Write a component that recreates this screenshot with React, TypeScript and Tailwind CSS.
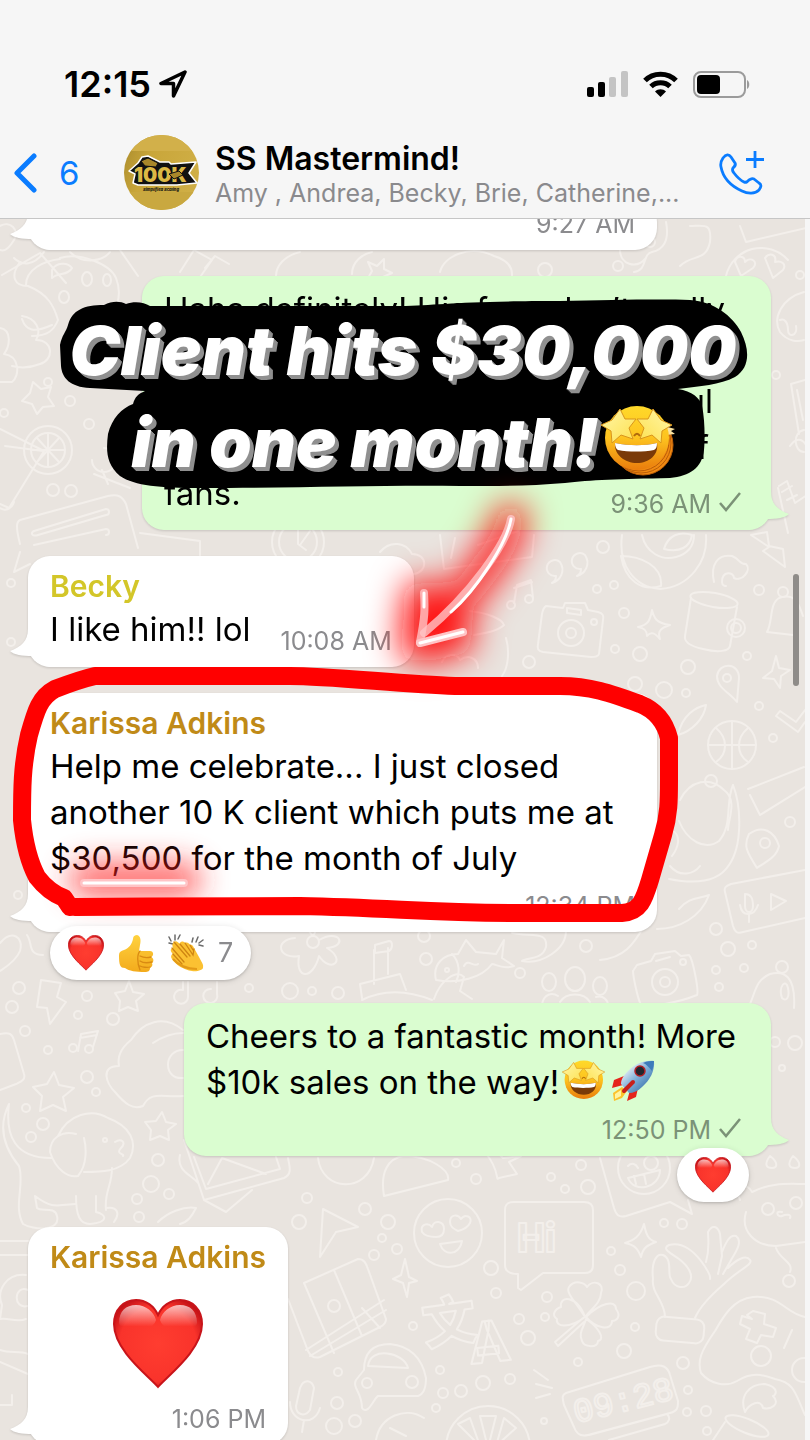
import { ReactNode } from "react";
import clsx from "clsx";

type Side = "in" | "out";

// [x, y, radius] of the small rings scattered over the wallpaper
const RINGS: number[][] = [
  [48, 382, 4], [70, 401, 5], [4, 413, 4], [89, 424, 5], [53, 490, 6], [71, 491, 6], [11, 583, 4],
  [11, 642, 4], [603, 547, 6], [597, 589, 4], [614, 585, 4], [624, 613, 5], [615, 649, 4],
  [640, 654, 7], [529, 662, 6], [759, 590, 5], [747, 656, 4], [688, 667, 7], [635, 684, 7],
  [664, 690, 8], [686, 693, 4], [759, 706, 4], [773, 738, 4], [711, 781, 6], [790, 822, 5],
  [716, 929, 6], [728, 949, 7], [752, 945, 4], [716, 970, 4], [744, 968, 4], [719, 987, 4],
  [586, 946, 6], [520, 973, 5], [426, 959, 6], [424, 936, 6], [18, 895, 4], [19, 988, 6],
  [12, 1007, 6], [87, 996, 5], [78, 1015, 4], [113, 1019, 6], [25, 1031, 5], [48, 1050, 4],
  [249, 988, 4], [290, 991, 8], [312, 991, 4], [338, 993, 6], [87, 1077, 6], [96, 1092, 4],
  [26, 1108, 4], [43, 1124, 6], [31, 1137, 5], [158, 1160, 6], [151, 1184, 8], [169, 1194, 5],
  [137, 1199, 5], [139, 1217, 5], [307, 1198, 5], [365, 1209, 6], [299, 1222, 7], [388, 1222, 7],
  [382, 1238, 4], [374, 1255, 5], [397, 1249, 5], [456, 1163, 4], [476, 1179, 5], [551, 1177, 4],
  [581, 1165, 5], [588, 1187, 7], [565, 1189, 4], [664, 1223, 4], [682, 1224, 5], [491, 1268, 7],
  [496, 1293, 5], [413, 1326, 4], [547, 1297, 5], [519, 1319, 5], [545, 1317, 4], [528, 1338, 7],
  [611, 1251, 4], [620, 1270, 5], [636, 1291, 9], [635, 1327, 4], [624, 1351, 7], [578, 1362, 4],
  [683, 1363, 6], [688, 1390, 4], [687, 1412, 4], [706, 1411, 5], [707, 1431, 4], [440, 1370, 4],
  [483, 1383, 7], [510, 1379, 5], [443, 1393, 5], [461, 1391, 6], [436, 1408, 4], [544, 1421, 3],
  [338, 1372, 4], [337, 1403, 6], [334, 1426, 8], [355, 1421, 6], [775, 1042, 5], [795, 1043, 7],
  [782, 1068, 3], [618, 266, 5], [776, 375, 4], [650, 242, 5], [800, 275, 4], [545, 270, 7],
];

function Doodles() {
  return (
    <svg
      aria-hidden="true"
      viewBox="0 219 805 1221"
      preserveAspectRatio="xMidYMin slice"
      className="absolute inset-0 h-full w-full"
      fill="none"
      stroke="#f3efeb"
      strokeWidth="2"
      strokeLinecap="round"
      strokeLinejoin="round"
    >
      {RINGS.map(([x, y, r]) => (
        <circle key={`${x}-${y}`} cx={x} cy={y} r={r} />
      ))}
      {/* top strip */}
      <path d="M0 226c10-6 20 4 14 14s-10 12-14 10M2 275l38-22 26 30M14 258c8 8 20 8 30-6M70 252c14 14 34 8 40 0M120 250l18 26M180 272l14-22 18 10-14 20M205 268l10-12 14 8" />
      <path d="M300 252c-16 4-24 14-24 24M352 274c0-12 10-20 20-22M368 262l9 4 7-7v10l8 4-9 4-1 9-6-8-9 2 5-9zM440 272c4-16 30-28 54-16 20 6 18 18 18 20M620 250c0 14 16 20 26 8M666 222c4 20-4 28-14 30s-4 18-18 20M690 226c14 0 22-4 20 16-4 20-18 12-30 24M740 226l6 16 60-14M726 276a36 36 0 0 1 62-16M735 262c2-8 10-6 10 0 6-6 14 0 8 6l-12 8zM765 258c4-6 12-4 10 4 6-2 12 2 8 8l-10 8z" />
      {/* cookie, clouds and star */}
      <path d="M20 262c-10 14-6 24 8 24 20 8 26 20 30 34-4 10-10 16-26 16M26 285c0-16 18-24 34-26M60 258c20-6 50 6 56 20 8 20-2 34-10 46M52 325c-18 8-26 6-30-6M52 270c4-8 16-8 20-2-4 8-14 4-20 10z" />
      <ellipse cx="64" cy="297" rx="5" ry="6" />
      <ellipse cx="87" cy="279" rx="5" ry="7" />
      <ellipse cx="107" cy="280" rx="4" ry="6" />
      <path d="M0 328c12 2 10 18 4 26 16 2 16 22 8 28H0M22 316c14 2 20 14 14 24 18 0 18 20 4 24-10 4-20 4-28 2M33 382l8 7 10-2-3 10 6 9-11 1-6 7-5-10-10-3 8-8z" />
      <circle cx="48" cy="450" r="24" />
      <circle cx="48" cy="450" r="17" />
      <path d="M48 434v32M32 450h32M37 438l22 24M59 438l-22 24M0 429l44 22-35 57-9-4M5 446l38 5M104 448a12 12 0 1 1-12 12M102 470l6 14M130 488l-36-14" />
      <path d="M20 520l88-24c10-2 14 0 18 8l12 44M20 520c-4 2-4 8 0 24M34 531l72-22c4 0 4 6 0 6l-68 20c-6 2-8-2-4-4zM34 545l72-16c4 0 4 6 0 6M20 552l-6 20 16-8M0 508c6 4 12 0 14-6" />
      {/* beside the first outgoing message */}
      <path d="M804 292c-22 6-32 26-24 40 8 10 18 10 24 8M780 320c4-2 8 2 8 10s10 6 8-4M791 384l14-4M791 384l8 50M797 390l6 30M790 446c10-14 20-2 18 14M779 486l8-5 8 22 12-8M782 492l10-6M787 500l10-5M778 488l10 45M804 430c-12 2-10 22 0 22" />
      {/* watch, sweets and leaves between bubbles */}
      <circle cx="298" cy="542" r="26" />
      <circle cx="298" cy="542" r="19" />
      <path d="M298 530v14l8 6M300 545l10-14M380 552c10-12 26-10 32 2 16 0 16 18 2 20M440 535l4 34 88-12 2-22M455 538l-4 20M478 545l40-14M140 533l60 8v18" />
      <path d="M622 535c-4 30 12 52 38 54 30-2 48-28 46-54M642 535c4 18 20 26 34 22 14-4 18-12 18-22M664 549c4-14 16-18 28-14-2 12-12 18-28 14zM621 556c20 0 42 10 40 30-20 6-36-6-40-30zM751 535l16-3 2 14 14 3 2 18-22-16 6-4z" />
      <path d="M560 562a8 8 0 1 0-4 14c0 4-2 6-4 7 8-2 14-12 8-21zM585 555a8 8 0 1 0-4 14c0 4-2 6-4 7 8-2 14-12 8-21zM714 582c-4-18 4-28 18-26 10 4 6 8 14 8 6 6-4 18-12 14 0-6-12-8-12 4 0 4 4 4 4 4" />
      <path d="M514 603l3-18 14-5 2 18M514 588l18-6M470 611c18 2 32 8 34 14-6 6-18 8-30 10M506 638c4 14 2 30-4 38M442 662c4-10 16-8 18-2 8-6 18-2 18 8" />
      <circle cx="511" cy="605" r="4" />
      <circle cx="529" cy="599" r="4" />
      {/* camera, mug, bell */}
      <path d="M546 606l17 2 2-5h20l3 7 10 2c5 1 6 4 5 8l-4 34c-1 3-4 3-8 3l-48-5c-5-1-6-3-5-8l4-30c1-5 2-7 4-8z" />
      <circle cx="571" cy="633" r="13" />
      <circle cx="571" cy="633" r="5" />
      <circle cx="594" cy="622" r="3" />
      <path d="M567 608l14 2v5l-14-2zM652 610c2 8 4 13 18 15-9 3-13 6-10 14-5-6-9-8-13-3 0-5-2-8-9-9 10-2 12-6 14-17z" />
      <ellipse cx="714" cy="600" rx="24" ry="7" transform="rotate(10 714 600)" />
      <path d="M691 598l-6 38c-1 6 4 10 18 13 16 4 26 2 27-3l7-39" />
      <circle cx="736" cy="628" r="9" />
      <circle cx="736" cy="628" r="5" />
      <circle cx="783" cy="592" r="5" />
      <path d="M767 632c6-10 2-28 12-34 16-6 20 6 24 18M767 632l26 3M776 656l3 12 11 2-9 6-1 12-6-9-11-1 9-7z" />
      {/* right column next to the circled message */}
      <path d="M737 702c-8-10-20-14-20-26 2-14 22-14 22 2zM776 716l4-5 16 11 9-12M776 716l22 16 7-10M678 735c4-20 18-28 28-30-2 14-14 26-28 30z" />
      <circle cx="727" cy="678" r="4" />
      <circle cx="732" cy="745" r="24" />
      <path d="M732 721v48M708 745h48M716 728c12 10 12 26 0 34M748 728c-12 10-12 26 0 34M680 800c10-20 30-24 44-10 14 10 4 30 4 40M733 785c-8 18 0 40-14 56-14 10-32 0-40-20M733 785c8 20 10 60-4 80-10 16-30 20-60 14M748 789l56-22M750 795l10 20 45-28M757 868c-10-16-14-22-8-34 14-10 26-2 30 12-2 10-10 14-22 22zM672 830c10 6 6 18 0 26M670 866c10 12 24 8 30 0" />
      <circle cx="765" cy="843" r="5" />
      <path d="M805 870l-74 14c-6 2-7 4-6 8l8 34c2 6 4 8 10 6l62-14M771 894v16l15-9zM745 894c6 0 8 4 8 12s-8 8-8 0zM740 905c2 12 14 12 18 0M749 914v8M709 895c-8 22-30 34-52 34M709 895c-10 4-20 2-30 14M600 960c24-2 34-16 44-34" />
      {/* fish, camera, people */}
      <path d="M436 980c-4-16 8-26 22-26l8-14 10 12 20 2 8-14-2 18 12 8c-12 4-18-2-22-2-10 14-34 20-56 16zM452 954c8 8 8 20 4 28M464 966c4-8 10 2 14-2M512 933c20 4 36-2 34 14-4 14-20 10-24 14 20 4 44-12 44-30" />
      <circle cx="447" cy="970" r="2" />
      <ellipse cx="575" cy="979" rx="10" ry="12" />
      <ellipse cx="549" cy="982" rx="7" ry="9" />
      <ellipse cx="600" cy="986" rx="7" ry="9" />
      <path d="M542 1004c2-10 10-12 16-8M560 1002c6-10 24-10 30 0M596 997c8-2 12 4 12 8M637 965l14-4 4-7 20-3 6 5 8-1c4 4 10 36 8 40-20 8-44 12-56 10-4-8-8-30-8-34z" />
      <circle cx="665" cy="982" r="13" />
      <circle cx="665" cy="982" r="5" />
      <circle cx="683" cy="962" r="3" />
      <path d="M656 961l14-4M750 1004c6-14 6-24 20-30 14-4 26 2 24 34M782 998c-4-12 4-20 6-10s-2 14-6 10z" />
      <circle cx="782" cy="967" r="6" />
      <circle cx="313" cy="942" r="6" />
      <path d="M313 936c-14-14 10-14 0 0M319 940c20-12 30 6 8 8 20 12 4 26-8 8-6 24-24 24-20 0-20 4-26-16-4-18M375 945l14-4c4 0 4 8 0 10l-14 2zM374 950v34M388 948v26M362 998l-2-14 40-10 6 16M362 1000c24-12 50-8 70 0M434 999c6-18 22-30 30-22l-4 14 12 8" />
      {/* left column of small things */}
      <path d="M0 943c12-14 24-6 20 8-4 10-14 16-20 20M27 935c6 8 0 20 16 20M41 980l20 3-4 14 9 5-16 22-3-16-10-1zM129 981l4 11 11 2-8 7 2 10-10-4-9 4 1-10-5-8 10-2zM188 982v14a7 7 0 1 1-5-6v-8M217 982v12a7 7 0 1 1-6-5M78 1051l3-17 17-3-5 16M80 1038l17-3" />
      <circle cx="73" cy="1048" r="4" />
      <circle cx="89" cy="1049" r="4" />
      <path d="M0 1034c10-2 12 0 14 6l10 34c2 6-4 8-8 10l-16 6M54 1072l5 13 15 3-11 9 3 14-13-6-13 6 2-15-9-9 14-3zM162 1112l4 10 10 2-8 6 1 10-9-4-10 4 1-10-6-8 11-1z" />
      <path d="M183 1030c-20-16-40-8-52 10-10 8-14 16-12 26-20 0-12 18-4 26 10 12 18 18 28 14 8-16 20-8 40-10M183 1033c-14 0-24 6-30 10M183 1050c-20 0-20 30 0 28" />
      <path d="M9 1104c-10 20-8 40 10 62 6 18-6 40 4 58 10 6 38 8 34-8-2-10-16-4-20-8l-2-12c16 12 20 10 40 8M9 1104c-4 32 6 54 42 54M58 1136c10-22 34-28 50-18 22 8 30 24 22 40-10 14-30 14-46 14M76 1134c-14-4-26 4-26 18 6 18 18 26 28 24 10-12 8-30 6-38M112 1168c0 18-8 24-6 42M76 1196c0 20 4 28 14 28 20-2 16-10 6-12v-16M106 1208c12-2 14 6 8 14" />
      <circle cx="105" cy="1140" r="2" />
      <path d="M115 1142c6-4 12 0 6 6s4 6 2 8M184 1140l20 60 80-22c8-4 6-10 4-20M194 1157l12 32 74-20-4-12M208 1184l14-26 44 16M180 1155c-4 16 12 20 18 28M204 1200l22 12 26-22M318 1158c4 34 50 36 56 0M384 1196c-4-24 4-38 20-40 26 0 46 14 44 24zM158 1222c10-10 26-16 38-14-4 8-8 14-16 16" />
      {/* bottom area */}
      <path d="M485 1152c16 20 10 30 14 26l18-4-8-12 12-6-18 2-8-8M600 1158l14 50c2 6 4 10 12 8l44-14 22 12-4-14" />
      <circle cx="644" cy="1168" r="26" />
      <circle cx="651" cy="1163" r="7" />
      <path d="M628 1178l32-8c0 18-26 24-32 8zM634 1176l2 8M644 1174l2 10M628 1166c4-4 8-2 10 2M770 1156c-6 8-4 12 2 12s6-6-2-12zM793 1156c-6 8-4 12 2 12s6-6-2-12z" />
      <path d="M740 1200c-6-14 8-18 12-8 20-10 36-8 54-8M746 1212c-6 20 10 34 30 34l29-4M782 1212c-8-2-4 6 0 4s10-2 8 2M776 1248c4 12 18 14 14 24" />
      <circle cx="768" cy="1209" r="6" />
      <circle cx="796" cy="1203" r="6" />
      <circle cx="789" cy="1281" r="6" />
      <circle cx="448" cy="1233" r="34" />
      <path d="M422 1232c-2-8 6-10 10-5 2-8 12-6 12 2 0 6-4 8-8 8-8 0-12-2-14-5zM450 1222c0-8 8-8 11-3 4-6 12-2 9 4-2 4-8 7-12 8-4-2-8-4-8-9zM440 1244l22-3c-2 14-18 16-22 3z" />
      <path d="M514 1202h70c6 0 9 3 9 8v55c0 5-3 8-8 8h-42l-22 17-3-2v-14c-8 0-13-2-13-9v-55c0-6 3-8 9-8zM644 1224c2 10 4 16 12 18-8 3-13 5-15 15-3-8-6-12-16-14 9-3 15-6 19-19z" />
      <text x="517" y="1252" fontFamily="Roboto, sans-serif" fontWeight="900" fontSize="40">Hi</text>
      <text x="469" y="1362" transform="rotate(-6 490 1340)" fontFamily="Roboto, sans-serif" fontWeight="900" fontSize="58">A</text>
      <text x="422" y="1342" transform="rotate(-8 445 1320)" fontFamily="'Noto Sans CJK SC', sans-serif" fontWeight="900" fontSize="54">文</text>
      <path d="M585 1317c-8-14-20-24-16-30 6-8 16-4 18 0 6-8 18-4 14 6 0 10-10 16-16 24zM585 1317c-16 12-30 10-28 2-6-4-2-10 4-12-2-12 16-12 24 10zM586 1317c14-14 30-18 30-8 6 8 0 12-4 12 0 10-16 8-26-4zM586 1319c12 8 20 20 12 22 0 8-14 6-16 0-4-8 2-14 4-22zM583 1318l-28 24 3 4 26-24" />
      <path d="M665 1317c0-16-14-24-12-38-2-18 4-26 10-24 10 4 4 20 8 24 4 10 14 10 18 4 6-8-2-18-10-24-8-6-18-10-10-14 14-4 26 8 32 16 6 8 10 14 9 18M706 1262c4-14 2-24 2-30 4-8 10-6 12 2l2 22-4 18M722 1252c4-10 8-18 14-16 8 6-2 18-6 26l-7 12M728 1268c8-8 18-14 22-8 4 4-12 10-26 24-14 12-24 22-29 34" />
      <rect x="656" y="1318" width="48" height="24" rx="8" transform="rotate(5 680 1330)" />
      <path d="M805 1317c-20-4-24-22-52-20-20 2-30 20-38 34-14 20-18 30-14 42 10 12 26 14 36 8 16-10 26-6 38-2 20 4 20 14 30 36M747 1315l6-4 12 3-1 10 12 4-3 9-12-2-4 8-11-4 4-10-10-5 2-8 10 3zM792 1330l-8 18" />
      <circle cx="761" cy="1356" r="10" />
      <circle cx="804" cy="1370" r="12" />
      <path d="M745 1412c-6-16 4-28 20-28 16 4 10 12 8 12 8 8-2 14-10 12-2-10-14-4-18 4z" />
      <ellipse cx="747" cy="1426" rx="23" ry="7" transform="rotate(22 747 1426)" />
      <path d="M725 1422l-12 18M566 1393l84-26c12-4 18 0 20 8l8 26c0 6 0 10-8 12l-82 22c-8 2-12-2-14-8l-10-22c-2-8-2-10 2-12zM589 1435l78-21c4 4 2 8-2 10l-56 16M534 1370l14 10M536 1384l16 4M536 1398l14-4" />
      <text x="572" y="1412" transform="rotate(-14 620 1400)" fontFamily="'Liberation Mono', monospace" fontSize="34">09:28</text>
      <circle cx="488" cy="1448" r="42" />
      <path d="M488 1448l-8-32h16zM480 1446l-22-22 12-6zM496 1446l8-28 12 10z" />
      <path d="M323 1209l-3 48 16-25 22-5zM304 1283l54-24c6 0 8 4 10 10l18 50c0 4-2 6-6 8l-60 30c-6 2-10-2-12-6l-20-52M306 1350l78-50M310 1356l76-46M362 1308l18 20M304 1283l30 70M334 1270l28 66" />
      <circle cx="334" cy="1306" r="6" />
      <path d="M405 1259l-4 16-8 4 10 4 4 14 2-14 8-2-8-4zM364 1370c0-18 10-26 26-26 20 2 32 14 36 34 0 10-2 16-8 18h-40c-4 2-10 20-16 12 0-16-10-20-6-28zM368 1366c2-20 36-14 40 2z" />
      <circle cx="367" cy="1383" r="5" />
      <circle cx="412" cy="1382" r="6" />
      <path d="M300 1388c4-10 12-8 14 0l-4 22c-6 8-14 4-14-4zM290 1402c0 20 24 26 30 6M304 1420l-2 12M376 1440c4-24 30-34 48-22M390 1428l16 8" />
      <path d="M0 1241h28M0 1255h28M0 1350c10 4 20 0 28 4M0 1362l28 12M12 1395v10H0M26 1275c-20-2-30 16-24 30l-2 14c8-2 16 4 26 0M28 1290c-14-6-16 20 0 16" />
    </svg>
  );
}

function Heart({ className }: { className?: string }) {
  return (
    <svg viewBox="0 0 90 90" className={className} role="img" aria-label="Red heart">
      <defs>
        <radialGradient id="heartFill" cx="50%" cy="50%" r="62%">
          <stop offset="0" stopColor="#ff3d30" />
          <stop offset="0.7" stopColor="#f9332b" />
          <stop offset="1" stopColor="#b70a12" />
        </radialGradient>
        <linearGradient id="heartShine" x1="0" y1="0" x2="0" y2="1">
          <stop offset="0" stopColor="#fff" stopOpacity="0.7" />
          <stop offset="0.8" stopColor="#fff" stopOpacity="0" />
        </linearGradient>
      </defs>
      <path
        d="M45 88C37 78 1 52 1 25 1 10 11 1 23 1c10 0 18 6 22 15C49 7 57 1 67 1c12 0 22 9 22 24 0 27-36 53-44 63z"
        fill="url(#heartFill)"
        stroke="#c8141a"
        strokeWidth="2"
      />
      <path d="M6 24C6 12 13 6 23 6s18 7 20 15c-4 14-34 16-37 3zM84 24C84 12 77 6 67 6s-18 7-20 15c4 14 34 16 37 3z" fill="url(#heartShine)" />
    </svg>
  );
}

function ThumbsUp() {
  return (
    <svg viewBox="0 0 36 38" className="h-[38px] w-9" role="img" aria-label="Thumbs up">
      <defs>
        <linearGradient id="thumbFill" x1="0" y1="0" x2="0" y2="1">
          <stop offset="0" stopColor="#ffd23f" />
          <stop offset="1" stopColor="#f3ab1c" />
        </linearGradient>
      </defs>
      <path
        d="M1 21c0-3 2-4 5-5 5-2 8-6 9-11 0-3 2-4 4-4 4 1 4 6 3 10l-1 6h11c4 0 4 5 1 6 3 1 3 5 1 6 1 2 0 4-2 5 0 3-2 4-5 4-9 0-16-1-20-4-5 0-6-3-6-13z"
        fill="url(#thumbFill)"
      />
      <path d="M33 23c-4 1-9 0-11-1M34 28c-4 1-9 1-12-1M32 33c-3 1-8 0-10-1M22 17c-3 3-3 12 0 19" fill="none" stroke="#d98a12" strokeWidth="1.3" strokeLinecap="round" />
    </svg>
  );
}

function Clap() {
  return (
    <svg viewBox="0 0 36 38" className="h-[38px] w-9" role="img" aria-label="Clapping hands">
      <path d="M1 3l2 4M7 1v5M12 1l-2 4M1 9l4 1M25 4l-1 4M30 3l-2 5M35 6l-4 3M35 12l-4-1" fill="none" stroke="#6b6b6b" strokeWidth="1.5" strokeLinecap="round" />
      <path
        d="M6 8c2-2 4 0 6 2 0-3 3-3 5-1 2-1 4 0 5 2 2-1 3 1 4 3l5 9c2 4 5 8 4 10 1 3-7 5-11 4C16 36 8 31 4 25c-2-3 0-5 1-5-3-3-3-5 0-6-1-3-1-4 1-6z"
        fill="#fbc132"
      />
      <path d="M6 8l13 15M4 14l12 14M5 20l9 10M12 10l10 12M17 9l8 12 1-6M22 11l3 5" fill="none" stroke="#cf8512" strokeWidth="1.3" strokeLinecap="round" />
      <path d="M5 25c6 7 14 10 24 10" fill="none" stroke="#e39a17" strokeWidth="2" />
    </svg>
  );
}

function StarStruck({ className, trail }: { className?: string; trail?: boolean }) {
  const star = "M19 3l5 10 11 0-7 9 4 11-12-4-9 8-1-12-10-6 11-5z";
  return (
    <svg viewBox="0 0 72 70" className={clsx("overflow-visible", className)} role="img" aria-label="Star-struck face">
      <defs>
        <linearGradient id="faceFill" x1="0" y1="0" x2="0" y2="1">
          <stop offset="0" stopColor="#ffd92a" />
          <stop offset="0.5" stopColor="#fdc31f" />
          <stop offset="1" stopColor="#e97c0c" />
        </linearGradient>
        <linearGradient id="starFill" x1="0" y1="0" x2="1" y2="1">
          <stop offset="0" stopColor="#fff7a8" />
          <stop offset="1" stopColor="#fde04f" />
        </linearGradient>
      </defs>
      {trail &&
        [6, 4, 2].map((d) => (
          <circle key={d} cx={34 + d} cy={34 + d} r="30" fill="#f08a12" stroke="#b95c08" strokeWidth="1" />
        ))}
      {trail && <path d="M61 21l11 3-4 2 4 3-9 1z" fill="#fbe3a0" />}
      <circle cx="34" cy="33" r="32" fill="url(#faceFill)" />
      <path d="M12 38c14 3 30 3 42 0 2 12-8 20-20 20S11 50 12 38z" fill="#7a3a08" />
      <path d="M12 38c14 3 30 3 42 0 0 4-1 6-3 7-10 2-26 2-36 0-2-1-3-4-3-7z" fill="#fff" />
      <path d="M31 31c2-3 4-3 6 0" stroke="#b06a0c" strokeWidth="2" fill="none" />
      <path d={star} transform="translate(-2 1)" fill="url(#starFill)" stroke="#d9951c" strokeWidth="1" strokeLinejoin="round" />
      <path d={star} transform="matrix(-1 0 0 1 69 1)" fill="url(#starFill)" stroke="#d9951c" strokeWidth="1" strokeLinejoin="round" />
    </svg>
  );
}

function Rocket({ className }: { className?: string }) {
  return (
    <svg viewBox="0 0 44 42" className={className} role="img" aria-label="Rocket">
      <defs>
        <linearGradient id="rocketBody" x1="0" y1="0" x2="1" y2="1">
          <stop offset="0.2" stopColor="#e6eef5" />
          <stop offset="0.5" stopColor="#7fb0d8" />
          <stop offset="0.9" stopColor="#2f68a5" />
        </linearGradient>
      </defs>
      <path d="M13 16L3 20 1 28l11-3zM27 28l-2 9-9 4 3-11z" fill="#e5241c" />
      <path d="M11 27l-9 6 1 8 8-3 5-7z" fill="#fbc22c" />
      <path d="M10 30l-6 4v5l6-3z" fill="#fff3a0" />
      <path d="M43 1c1 10-4 19-12 26-4 4-9 6-13 6l-8-9c0-5 3-9 7-13C24 4 33 0 43 1z" fill="url(#rocketBody)" />
      <path d="M43 1c0 4-1 7-2 10-3-4-6-7-9-8 4-2 8-2 11-2z" fill="#3d7cbb" />
      <circle cx="29" cy="11" r="5" fill="#20262e" stroke="#b32024" strokeWidth="1.5" />
      <path d="M22 22l-9 9" stroke="#c8201b" strokeWidth="4" strokeLinecap="round" />
    </svg>
  );
}

function Tail({ side }: { side: Side }) {
  return (
    <svg
      aria-hidden="true"
      viewBox="0 0 42 38"
      className={clsx(
        "absolute bottom-0 h-[38px] w-[42px]",
        side === "in" ? "-left-[18px] fill-white" : "-right-[18px] -scale-x-100 fill-[#dafdd0]",
      )}
    >
      <path d="M18 0C18 12 11 18 0 22c4 4 12 5 23 5 5 6 11 11 19 11V0z" />
    </svg>
  );
}

function Check() {
  return (
    <svg viewBox="0 0 22 20" className="mb-1 h-5 w-[22px]" fill="none" stroke="currentColor" strokeWidth="2.5" role="img" aria-label="Sent">
      <path d="M1 11l6 7L21 1" />
    </svg>
  );
}

function Time({ children, sent, className }: { children: ReactNode; sent?: boolean; className?: string }) {
  return (
    <div
      className={clsx(
        "flex items-center justify-end gap-2 text-[25px] leading-7 whitespace-nowrap",
        sent ? "text-[#7b9277]" : "text-[#8b8b8e]",
        className,
      )}
    >
      <time>{children}</time>
      {sent && <Check />}
    </div>
  );
}

function Bubble({ side, className, children }: { side: Side; className?: string; children: ReactNode }) {
  return (
    <article
      className={clsx(
        "relative rounded-[22px] px-[22px] pt-[10px] pb-3 text-[33px] leading-[46px] text-black drop-shadow-[0_1px_1px_rgba(0,0,0,0.15)]",
        side === "in" ? "self-start bg-white" : "self-end bg-[#dafdd0]",
        className,
      )}
    >
      <Tail side={side} />
      <div className="relative">{children}</div>
    </article>
  );
}

function Author({ children, className }: { children: ReactNode; className: string }) {
  return <h2 className={clsx("text-[30px] leading-10 font-semibold", className)}>{children}</h2>;
}

function Reactions({ children, className }: { children: ReactNode; className: string }) {
  return (
    <button
      className={clsx(
        "absolute flex h-[54px] items-center rounded-full bg-white px-[18px] shadow-[0_1px_6px_rgba(0,0,0,0.12)]",
        className,
      )}
    >
      {children}
    </button>
  );
}

function StatusBar() {
  return (
    <div className="flex items-center justify-between pr-[60px] pl-16">
      <div className="flex items-center gap-2">
        <span className="text-[36px] leading-[44px] font-semibold">12:15</span>
        <svg viewBox="0 0 28 28" className="size-7" fill="none" stroke="#000" strokeWidth="3.500" strokeLinejoin="round" aria-label="Location">
          <path d="M26 2L2 13.500h12.500V26z" />
        </svg>
      </div>
      <div className="flex items-center gap-[15px]">
        <svg viewBox="0 0 41 26" className="h-[26px] w-[41px]" aria-label="Signal">
          <rect x="0" y="16" width="7" height="10" rx="2" />
          <rect x="11" y="11" width="7" height="15" rx="2" />
          <rect x="22" y="6" width="7" height="20" rx="2" fill="#c4c4c4" />
          <rect x="34" y="0" width="7" height="26" rx="2" fill="#c4c4c4" />
        </svg>
        <svg viewBox="0 0 35 26" className="h-[26px] w-[35px]" fill="none" stroke="#000" strokeWidth="5" aria-label="Wi-Fi">
          <path d="M2 9.500C10 1 25 1 33 9.500M8 15.500c5-5 14-5 19 0" />
          <path d="M12 20.500c3-3 8-3 11 0L17.500 26z" fill="#000" stroke="none" />
        </svg>
        <svg viewBox="0 0 57 27" className="h-[27px] w-[57px]" aria-label="Battery">
          <rect x="1" y="1" width="51" height="25" rx="7" fill="none" stroke="#9b9b9b" strokeWidth="2" />
          <rect x="4" y="4" width="23" height="19" rx="4" />
          <path d="M54 9c3 1 3 8 0 9z" fill="#9b9b9b" />
        </svg>
      </div>
    </div>
  );
}

function Avatar() {
  return (
    <svg viewBox="0 0 75 75" className="size-[75px] shrink-0" role="img" aria-label="100K Simplified Scaling">
      <defs>
        <linearGradient id="gold" x1="0" y1="0" x2="1" y2="0.4">
          <stop offset="0" stopColor="#a88a2c" />
          <stop offset="0.4" stopColor="#c9a63a" />
          <stop offset="1" stopColor="#cfae45" />
        </linearGradient>
        <clipPath id="avatarClip">
          <circle cx="37.500" cy="37.500" r="37.500" />
        </clipPath>
      </defs>
      <g clipPath="url(#avatarClip)">
        <rect width="75" height="75" fill="url(#gold)" />
        <rect width="75" height="16" fill="#d2b04a" />
        <rect y="57" width="75" height="18" fill="#c9a840" />
      </g>
      <path d="M5 36l9-8 4-6 6-1 12 6h9l2 2 25-2-7 11 8 10-20 2H14l-5-2 2-9z" fill="#111" stroke="#fff" strokeWidth="1.500" strokeLinejoin="round" />
      <text x="10" y="47" fontFamily="Inter, sans-serif" fontWeight="900" fontSize="20" fill="#dcb845">
        100K
      </text>
      <path d="M17 26l7-3 10 5-2 4-11-1zM45 39l10-3 4 4-9 4z" fill="#a8872a" stroke="#111" strokeWidth="1" />
      <text x="37" y="56" textAnchor="middle" fontFamily="Inter, sans-serif" fontStyle="italic" fontWeight="800" fontSize="4" fill="#111">
        Simplified Scaling
      </text>
    </svg>
  );
}

function ChatHeader() {
  return (
    <header className="relative z-10 shrink-0 border-b border-[#c6c6c6] bg-[#f6f6f6] pt-[62px] pb-2">
      <StatusBar />
      <div className="mt-[29px] flex items-center pr-[45px] pl-[14px]">
        <a href="#chats" aria-label="Back, 6 unread chats" className="flex w-[110px] items-center gap-[21px] text-[33px] leading-10 text-[#0a7cff]">
          <svg viewBox="0 0 24 40" className="h-10 w-6" fill="none" stroke="currentColor" strokeWidth="5" strokeLinecap="round" strokeLinejoin="round">
            <path d="M20 3L3 20l17 17" />
          </svg>
          6
        </a>
        <Avatar />
        <div className="ml-4 min-w-0 flex-1 pt-1">
          <h1 className="text-[32px] leading-9 font-semibold whitespace-nowrap">SS Mastermind!</h1>
          <p className="text-[25px] leading-8 whitespace-nowrap text-[#8a8a8d]">Amy , Andrea, Becky, Brie, Catherine,...</p>
        </div>
        <button aria-label="Start group call" className="text-[#0a7cff]">
          <svg viewBox="0 0 46 46" className="size-[46px]" fill="none" stroke="currentColor" strokeWidth="2.800" strokeLinecap="round" strokeLinejoin="round">
            <path d="M4 8c3-4 6-4 8-1l4 6c1 2 0 3-2 5-1 2-1 3 1 5 3 4 6 7 10 9 2 1 3 0 5-2 2-1 3-2 5-1l5 4c3 2 2 4 0 7-4 4-11 4-17 1C12 36 4 28 2 17c-1-4 0-6 2-9z" />
            <path d="M36 1v17M27 9.500h18" strokeLinecap="butt" />
          </svg>
        </button>
      </div>
    </header>
  );
}

// marker strokes and blacked-out area drawn over the conversation
function Annotations() {
  return (
    <div className="pointer-events-none absolute inset-x-0 top-0 z-20">
      <svg viewBox="0 0 810 1440" className="w-full" fill="none" strokeLinecap="round" strokeLinejoin="round" aria-hidden="true">
        <defs>
          <filter id="glow" filterUnits="userSpaceOnUse" x="300" y="400" width="320" height="360">
            <feGaussianBlur stdDeviation="17" />
          </filter>
          <filter id="lineGlow" filterUnits="userSpaceOnUse" x="0" y="760" width="300" height="240">
            <feGaussianBlur stdDeviation="15" />
          </filter>
        </defs>
        <path
          d="M60 345C62 335 66 332 68 325C72 310 84 305 104 305C112 301 120 301 126 304C134 301 144 302 150 306L400 306C440 305 460 301 560 301C610 300 660 299 690 300C715 302 732 316 741 332C750 350 750 368 735 377C720 385 700 386 678 389C692 391 700 398 702 406C705 420 705 440 704 450C702 468 690 476 670 478C620 479 590 480 565 483C530 486 500 486 460 486C380 485 300 488 200 488C160 488 135 486 120 476C106 464 106 450 108 434C112 418 122 408 133 404C135 397 138 394 145 391L90 388C70 387 62 378 61 366z"
          fill="#000"
        />
        <g stroke="#ff1010" filter="url(#glow)">
          <path d="M511 519c-4 24-40 75-87 116" strokeWidth="30" />
          <path d="M424 600c1 14-1 28-4 43l34-8" strokeWidth="40" />
        </g>
        <path d="M86 880h98" stroke="#ff2020" strokeWidth="34" opacity="0.700" filter="url(#lineGlow)" />
        <path
          d="M75 907C150 906 210 907 300 906C400 908 440 914 540 913L622 913C640 912 644 900 650 880L663 835C669 815 669 800 669 780V738C665 722 655 710 640 704C610 693 590 686 560 686H455C400 684 330 676 290 676H95C82 679 68 684 55 689C40 697 36 710 29 735C22 765 22 790 22 820C24 840 28 860 37 877C47 890 56 895 64 898L70 907"
          stroke="#ff0000"
          strokeWidth="18"
        />
        <g stroke="#ffc4c6" strokeWidth="8">
          <path d="M511 519c-4 24-40 75-87 114" strokeOpacity="0.800" />
          <path d="M424 593c1 16 1 24-4 49" strokeOpacity="0.800" />
          <path d="M420 643l43-11M84 883h100" />
        </g>
        <path d="M511 519c-4 24-34 70-60 93M420 643l43-11M84 883h100M424 593v14" stroke="#fff" strokeWidth="3" />
      </svg>
      <p className="absolute inset-x-0 top-[304px] pr-1 text-center text-[68px] leading-[92px] font-black whitespace-nowrap text-white italic [text-shadow:1px_1px_0_#909090,2px_2px_0_#909090,3px_3px_0_#909090,4px_4px_0_#909090]">
        Client hits $30,000
        <br />
        in one month!
        <StarStruck trail className="-mt-4 ml-1 inline-block h-[70px] w-[72px]" />
      </p>
    </div>
  );
}

export default function App() {
  return (
    <div className="relative flex h-screen flex-col overflow-hidden bg-[#f6f6f6] font-[Inter,'Noto_Sans',sans-serif]">
      <ChatHeader />
      <main className="relative mr-[5px] min-h-0 flex-1 overflow-hidden bg-[#e9e4df]">
        <Doodles />
        <div className="relative flex flex-col gap-[26px] pr-[34px] pl-7">
          <Bubble side="in" className="-mt-[19px] w-full max-w-[629px]">
            <Time>9:27 AM</Time>
          </Bubble>

          <Bubble side="out" className="w-full max-w-[629px]">
            <p>
              Haha definitely! His fans don’t really
              <span className="block h-[46px]" />
              <span className="block pr-9 text-right">ul</span>
              <span className="block pr-10 text-right">f</span>
              fans.
            </p>
            <Time sent className="-mt-[26px] pr-2">9:36 AM</Time>
          </Bubble>

          <Bubble side="in">
            <Author className="text-[#d3c629]">Becky</Author>
            <div className="flex items-end gap-[30px]">
              <p className="mb-[3px]">I like him!! lol</p>
              <Time>10:08 AM</Time>
            </div>
          </Bubble>

          <Bubble side="in" className="mb-[45px] max-w-[629px]">
            <Author className="text-[#c08a17]">Karissa Adkins</Author>
            <p>Help me celebrate... I just closed another 10 K client which puts me at $30,500 for the month of July</p>
            <Time className="mt-[11px]">12:34 PM</Time>
            <Reactions className="-bottom-[60px] left-0 gap-[14px] text-[27px] text-[#8b8b8e]">
              <Heart className="size-9" />
              <ThumbsUp />
              <Clap />
              <span>7</span>
            </Reactions>
          </Bubble>

          <Bubble side="out" className="mb-[45px] max-w-[587px]">
            <p>
              Cheers to a fantastic month! More $10k sales on the way!
              <StarStruck className="-mt-2 ml-1 inline-block h-[42px] w-11" />
              <Rocket className="-mt-2 ml-1 inline-block h-[42px] w-11" />
            </p>
            <Time sent className="mt-[11px] pr-2">12:50 PM</Time>
            <Reactions className="right-0 -bottom-[58px]">
              <Heart className="size-9" />
            </Reactions>
          </Bubble>

          <Bubble side="in">
            <Author className="text-[#c08a17]">Karissa Adkins</Author>
            <Heart className="mx-auto mt-[22px] mb-4 size-[90px]" />
            <Time>1:06 PM</Time>
          </Bubble>
        </div>
        <div className="absolute top-[355px] right-[6px] h-[112px] w-[6px] rounded-full bg-[#8f8c89]" />
      </main>
      <Annotations />
    </div>
  );
}
